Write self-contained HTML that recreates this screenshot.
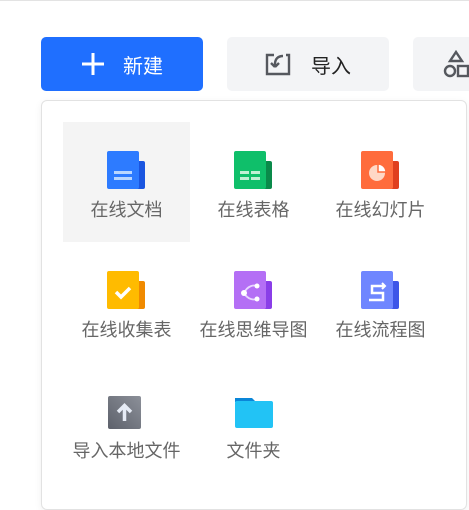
<!DOCTYPE html>
<html><head><meta charset="utf-8"><style>
*{margin:0;padding:0;box-sizing:border-box}
body{width:469px;height:501px;background:#fff;position:relative;overflow:hidden;font-family:"Liberation Sans","Noto Sans CJK SC",sans-serif}
.topline{position:absolute;left:0;top:0;width:469px;height:1px;background:#e3e3e3}
.btn{position:absolute;top:37px;height:54px;border-radius:5px;display:flex;align-items:center;justify-content:center;font-size:20px}
.new{left:41px;width:162px;background:#1f6fff;color:#fff}
.imp{left:227px;width:162px;background:#f3f4f6;color:#222}
.third{left:413px;width:70px;background:#f3f4f6;justify-content:flex-start;padding-left:30px}
.panel{position:absolute;left:41px;top:100px;width:426px;height:410px;border:1px solid #e2e2e2;border-radius:6px;background:#fff;box-shadow:0 2px 8px rgba(0,0,0,.06)}
.cell{position:absolute;width:127px;height:120px;text-align:center}
.cell.hl{background:#f4f4f4}
.cell svg{position:absolute;left:44px;top:29px}
.cell span{position:absolute;left:-15px;right:-15px;top:79px;font-size:18px;line-height:18px;color:#666;white-space:nowrap}
</style></head><body>
<div class="topline"></div>
<div class="btn new"><svg width="24" height="24" viewBox="0 0 24 24" style="margin-right:18px"><path d="M12 1v22M1 12h22" stroke="#fff" stroke-width="3"/></svg>新建</div>
<div class="btn imp"><svg width="26" height="24" viewBox="0 0 26 24" style="margin-right:20px"><path d="M9 3H2v19h22V3h-3" fill="none" stroke="#55585e" stroke-width="2.4"/><path d="M18 4c-5 0-8 3-8 8v3M10 15l-4-4M10 15l4-4" fill="none" stroke="#55585e" stroke-width="2.4"/></svg>导入</div>
<div class="btn third"><svg width="26" height="28" viewBox="0 0 26 28"><path d="M13 2l6 9H7z" fill="none" stroke="#55585e" stroke-width="2.4"/><circle cx="7" cy="21" r="5" fill="none" stroke="#55585e" stroke-width="2.4"/><rect x="15" y="16" width="10" height="10" fill="none" stroke="#55585e" stroke-width="2.4"/></svg></div>
<div class="panel">
<div class="cell hl" style="left:21px;top:21px"><svg width="38" height="38"><rect x="4" y="10" width="34" height="28" rx="2" fill="#1a55e0"/><rect width="32" height="38" rx="2" fill="#2d7bff"/><rect x="7" y="20" width="18" height="3" fill="#b9d6ff"/><rect x="7" y="26" width="18" height="3" fill="#b9d6ff"/></svg><span>在线文档</span></div>
<div class="cell" style="left:148px;top:21px"><svg width="38" height="38"><rect x="4" y="10" width="34" height="28" rx="2" fill="#0a8a4a"/><rect width="32" height="38" rx="2" fill="#0fbf6a"/><rect x="6" y="20" width="9" height="3" fill="#bff0d4"/><rect x="17" y="20" width="9" height="3" fill="#bff0d4"/><rect x="6" y="26" width="9" height="3" fill="#bff0d4"/><rect x="17" y="26" width="9" height="3" fill="#bff0d4"/></svg><span>在线表格</span></div>
<div class="cell" style="left:275px;top:21px"><svg width="38" height="38"><rect x="4" y="10" width="34" height="28" rx="2" fill="#e0401f"/><rect width="32" height="38" rx="2" fill="#ff6c3c"/><circle cx="16" cy="22" r="8" fill="#ffd8c6"/><path d="M17 13a8 8 0 0 1 8 8h-8z" fill="#fff" stroke="#ff6c3c" stroke-width="1.5"/></svg><span>在线幻灯片</span></div>
<div class="cell" style="left:21px;top:141px"><svg width="38" height="38"><rect x="4" y="10" width="34" height="28" rx="2" fill="#f08a00"/><rect width="32" height="38" rx="2" fill="#ffbb00"/><path d="M9 21l5 5 9-9" fill="none" stroke="#fff" stroke-width="3.5"/></svg><span>在线收集表</span></div>
<div class="cell" style="left:148px;top:141px"><svg width="38" height="38"><rect x="4" y="10" width="34" height="28" rx="2" fill="#8a3ee8"/><rect width="32" height="38" rx="2" fill="#b46ff5"/><path d="M10 22C14 14 20 14 23 15M10 22C14 29 20 29 23 28" fill="none" stroke="#e9d7ff" stroke-width="1.8"/><circle cx="10" cy="22" r="3" fill="#fff"/><circle cx="23" cy="15" r="2.5" fill="#fff"/><circle cx="23" cy="28" r="2.5" fill="#fff"/></svg><span>在线思维导图</span></div>
<div class="cell" style="left:275px;top:141px"><svg width="38" height="38"><rect x="4" y="10" width="34" height="28" rx="2" fill="#3d55e8"/><rect width="32" height="38" rx="2" fill="#6f86ff"/><path d="M24 15H11v7h11v7H8" fill="none" stroke="#fff" stroke-width="2.5"/><path d="M21 12l3 3-3 3" fill="none" stroke="#fff" stroke-width="2"/></svg><span>在线流程图</span></div>
<div class="cell" style="left:21px;top:262px"><svg width="38" height="38"><defs><linearGradient id="g1" x1="1" y1="0" x2="0" y2="1"><stop offset="0" stop-color="#8c9099"/><stop offset="1" stop-color="#5d616b"/></linearGradient></defs><rect x="1" y="4" width="33" height="33" rx="2" fill="url(#g1)"/><path d="M17.5 29V15M11 20l6.5-6.5L24 20" fill="none" stroke="#e6ebf5" stroke-width="3.5"/></svg><span>导入本地文件</span></div>
<div class="cell" style="left:148px;top:262px"><svg width="40" height="38"><path d="M1 6h17l4 4H1z" fill="#0a86d8"/><rect x="1" y="9" width="38" height="27" rx="2" fill="#22c3f5"/></svg><span>文件夹</span></div>
</div>
</body></html>
